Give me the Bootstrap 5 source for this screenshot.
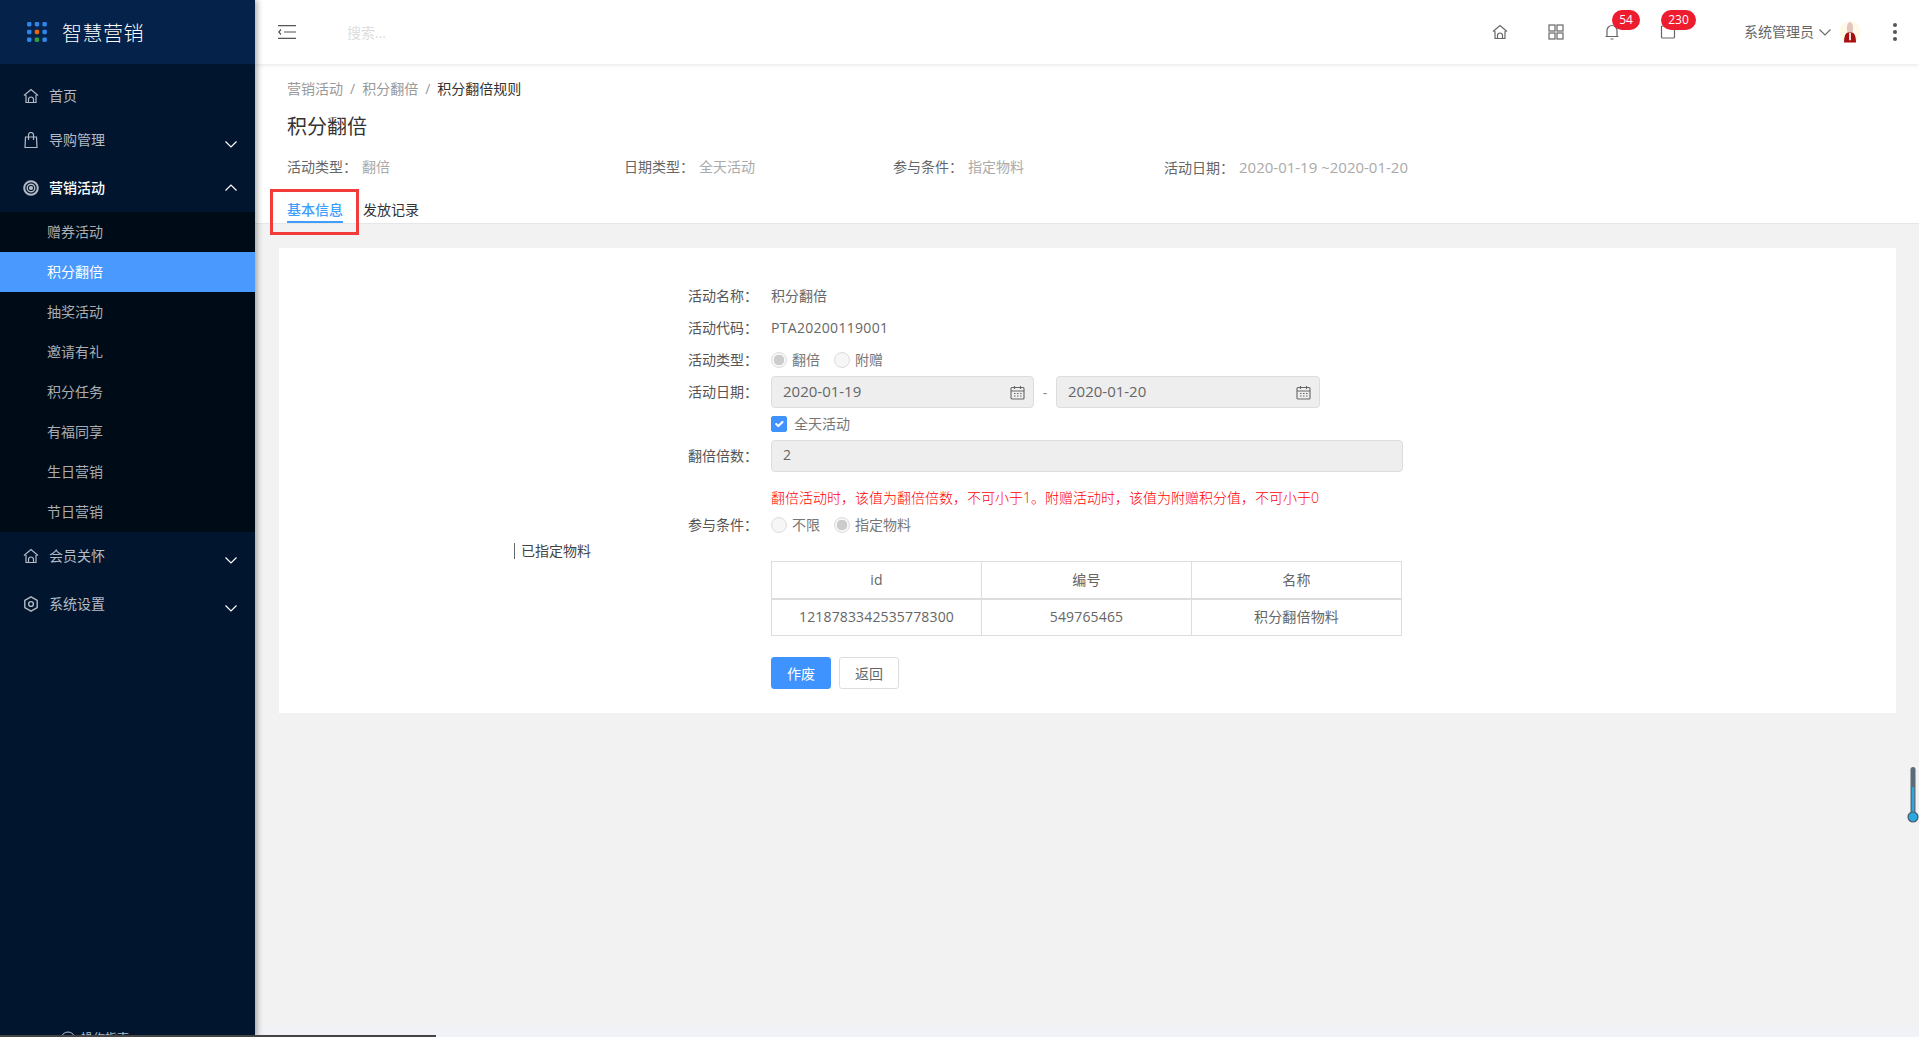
<!DOCTYPE html>
<html lang="zh">
<head>
<meta charset="utf-8">
<title>积分翻倍</title>
<link href="https://cdn.jsdelivr.net/npm/bootstrap@5.3.0/dist/css/bootstrap.min.css" rel="stylesheet">
<style>
html,body{height:100%}
body{overflow:hidden;background:#f2f2f2;font-family:"Open Sans","Noto Sans CJK SC",sans-serif;font-size:14px;color:#555}
.app-shell{height:100vh}
.side-bar{width:255px;flex:0 0 255px;background:#01162e;box-shadow:2px 0 6px rgba(0,0,0,.35);z-index:3;overflow:hidden}
.side-logo{height:64px;background:#05234a;padding-left:27px;gap:15px;color:#fff;font-size:20px;font-weight:300}
.side-logo span{padding-top:3px;letter-spacing:.5px}
.side-menu{padding-top:12px;flex:1 1 auto}
.menu-link{height:48px;padding:0 23px;gap:10px;color:#b4bbc5;position:relative}
.menu-link span{padding-bottom:2px}
.menu-link.first-link{height:40px}
.menu-link.open-link{color:#fff;font-weight:500}
.menu-link svg.ic{width:16px;height:16px;flex:none;stroke:#b4bbc5;fill:none;stroke-width:1.2}
.menu-arrow{position:absolute;left:225px;top:25px;width:12px;height:7px;stroke:#fff;fill:none;stroke-width:1.2}
.menu-arrow.up{top:20px}
.sub-menu{background:#000b18}
.sub-link{height:40px;padding:0 0 2px 47px;color:#a9adb2;display:flex;align-items:center}
.sub-link.current{background:#4a99ff;color:#fff}
.guide-link{height:20px;margin-bottom:-12px;padding-left:60px;gap:5px;color:#b4bbc5;font-size:12px}
.main-pane{min-width:0}
.top-bar{height:64px;flex:none;background:#fff;box-shadow:0 1px 4px rgba(0,0,0,.1);z-index:2;padding-left:23px}
.top-search{margin-left:51px;color:#ddd;font-size:14px}
.top-icon{width:56px;height:64px;position:relative;display:flex;align-items:center;justify-content:center}
.top-icon svg{width:16px;height:16px;stroke:#666;fill:none;stroke-width:1.2}
.top-count{position:absolute;top:10px;height:20px;border-radius:10px;background:#ed1c2e;color:#fff;font-size:12px;line-height:20px;text-align:center}
.top-user{margin-left:48px;color:#666;gap:5px}
.top-user>span{padding-bottom:2px}
.top-user .avatar-pic{margin-left:3px;width:22px;height:22px}
.top-dots{margin:0 22px 0 32px;width:4px;gap:3px}
.top-dots i{display:block;width:4px;height:4px;border-radius:50%;background:#555}
.page-head{background:#fff;height:160px;flex:none;padding:0 0 0 32px;border-bottom:1px solid #e7e7e7;position:relative}
.crumbs{padding-top:15px;height:41px;color:#999;gap:7px;line-height:20px}
.crumbs b{color:#333;font-weight:400}
.page-name{font-size:20px;font-weight:400;color:#333;margin:7px 0 0;line-height:30px;height:30px}
.head-info{margin-top:15px;line-height:20px;height:20px}
.head-info>div:nth-child(1){width:337px}
.head-info>div:nth-child(2){width:269px}
.head-info>div:nth-child(3){width:271px}
.head-info span{color:#666}
.head-info em{font-style:normal;color:#aaa;margin-left:5px}
.head-info em.date-val{font-size:15px}
.head-tabs{position:absolute;left:32px;top:135px;gap:20px;color:#333;height:24px}
.tab-on{color:#409eff;font-weight:500;border-bottom:2px solid #409eff;height:24px;line-height:22px}
.tab-off{line-height:22px}
.mark-box{position:absolute;left:-17px;top:-10px;width:89px;height:46px;border:3px solid #f23b3b;pointer-events:none}
.form-card{background:#fff;margin:24px 23px 0 24px;padding:32px 0 24px}
.form-line{height:32px;display:flex;align-items:center}
.form-key{width:479px;margin-right:13px;text-align:right;flex:none;color:#555;padding-bottom:2px}
.form-val{color:#666;padding-bottom:2px}
.form-val.code-val{letter-spacing:.3px}
.plain-field{background:#eee;border:1px solid #ddd;border-radius:4px;height:32px;padding:0 11px;color:#666;line-height:30px;display:flex;align-items:center;justify-content:space-between}
.plain-field span{padding-bottom:2px}
.field-date{width:263px;font-size:15px}
.field-date.end-date{width:264px}
.field-wide{width:632px}
.field-date svg{width:15px;height:15px;stroke:#666;fill:none;stroke-width:1.1;margin-right:-3px}
.date-sep{width:22px;text-align:center;color:#888}
.form-check-input.gray-pick{width:16px;height:16px;margin:0;opacity:1;background-color:#f6f6f6;border-color:#ddd;flex:none}
.form-check-input.gray-pick:checked{background-image:none;background:radial-gradient(circle,#ccc 0 5px,#f6f6f6 5.5px);border-color:#ddd}
.form-check-input.blue-tick{width:16px;height:16px;margin:0;opacity:1;background-color:#3f93ff;border-color:#3f93ff;border-radius:2px}
.pick-text{margin:0 14px 0 5px;color:#777;padding-bottom:2px}
.hint-line{height:27px;padding:5px 0 0 492px;color:#f00;line-height:22px;font-weight:300}
.chosen-row{display:flex}
.chosen-side{width:492px;flex:none;height:22px;padding-left:235px;line-height:20px;color:#444}
.chosen-side span{border-left:1px solid #666;padding-left:6px;display:inline-block;line-height:16px}
.data-grid{width:631px;margin:20px 0 0;border-color:#ddd;color:#666;table-layout:fixed}
.data-grid th,.data-grid td{height:37px;padding:0 0 1px;text-align:center;vertical-align:middle;font-weight:400;color:#666;border-color:#ddd;letter-spacing:.15px}
.data-grid thead th{border-bottom-width:2px}
.act-row{padding-left:492px;margin-top:21px;gap:8px}
.act-row .btn{width:60px;height:32px;padding:2px 0 0;font-size:14px;border-radius:3px;line-height:28px}
.btn-void{background:#3f93ff;border-color:#3f93ff;color:#fff}
.btn-back{background:#fff;border-color:#ddd;color:#666}
.foot-strip{height:10px;background:#f0f2f7;flex:none;margin-top:auto}
.therm-gauge{position:absolute;right:0;top:766px;width:12px;height:57px;z-index:4}
.h-scroll{position:absolute;left:0;bottom:0;width:436px;height:2px;background:#444;z-index:5}
</style>
</head>
<body>
<div class="app-shell d-flex position-relative">
  <aside class="side-bar d-flex flex-column">
    <div class="side-logo d-flex align-items-center">
      <svg width="20" height="20" viewBox="0 0 20 20"><g fill="#2f86ea"><rect x="0" y="0" width="4.5" height="4.5" rx="1.4"/><rect x="7.7" y="0" width="4.5" height="4.5" rx="1.4"/><rect x="15.4" y="0" width="4.5" height="4.5" rx="1.4"/><rect x="0" y="7.7" width="4.5" height="4.5" rx="1.4"/><rect x="15.4" y="7.7" width="4.5" height="4.5" rx="1.4"/><rect x="0" y="15.4" width="4.5" height="4.5" rx="1.4"/><rect x="15.4" y="15.4" width="4.5" height="4.5" rx="1.4"/></g><rect x="7.7" y="7.7" width="4.5" height="4.5" rx="1.4" fill="#e8650f"/><rect x="7.7" y="15.4" width="4.5" height="4.5" rx="1.4" fill="#2e9e3f"/></svg>
      <span>智慧营销</span>
    </div>
    <nav class="side-menu">
      <div class="menu-link first-link d-flex align-items-center"><svg class="ic" viewBox="0 0 16 16"><path d="M1 7.5 8 1.5l7 6M3 7v7.5h10V7M5.5 14.5v-3a2.5 2.5 0 0 1 5 0v3"/></svg><span>首页</span></div>
      <div class="menu-link d-flex align-items-center"><svg class="ic" viewBox="0 0 16 16"><path d="M2.500 5h11l.5 10.500H2zM5.500 8V3a2.500 2.500 0 0 1 5 0v5"/></svg><span>导购管理</span><svg class="menu-arrow" viewBox="0 0 12 7"><path d="M.5.5 6 6 11.500.5"/></svg></div>
      <div class="menu-link open-link d-flex align-items-center"><svg class="ic" viewBox="0 0 16 16"><circle cx="8" cy="8" r="6.800" stroke-width="2"/><circle cx="8" cy="8" r="3.800" stroke-width="1.400"/><circle cx="8" cy="8" r="1.500" fill="#b4bbc5"/></svg><span>营销活动</span><svg class="menu-arrow up" viewBox="0 0 12 7"><path d="M.5 6.500 6 1l5.500 5.500"/></svg></div>
      <div class="sub-menu">
        <div class="sub-link">赠券活动</div>
        <div class="sub-link current">积分翻倍</div>
        <div class="sub-link">抽奖活动</div>
        <div class="sub-link">邀请有礼</div>
        <div class="sub-link">积分任务</div>
        <div class="sub-link">有福同享</div>
        <div class="sub-link">生日营销</div>
        <div class="sub-link">节日营销</div>
      </div>
      <div class="menu-link d-flex align-items-center"><svg class="ic" viewBox="0 0 16 16"><path d="M1 7.500 8 1.500l7 6M3 7v7.500h10V7M5.500 14.500v-3a2.500 2.500 0 0 1 5 0v3"/></svg><span>会员关怀</span><svg class="menu-arrow" viewBox="0 0 12 7"><path d="M.5.5 6 6 11.500.5"/></svg></div>
      <div class="menu-link d-flex align-items-center"><svg class="ic" viewBox="0 0 16 16" stroke-linejoin="round"><path d="M8 .8 14.200 4.400V11.600L8 15.200 1.800 11.600V4.400z" stroke-width="1.400"/><circle cx="8" cy="8" r="2.400" stroke-width="1.400"/></svg><span>系统设置</span><svg class="menu-arrow" viewBox="0 0 12 7"><path d="M.5.5 6 6 11.500.5"/></svg></div>
    </nav>
    <div class="guide-link d-flex align-items-center"><svg width="16" height="16" viewBox="0 0 16 16" fill="none" stroke="#b4bbc5"><circle cx="8" cy="8" r="7"/><path d="M8 7v4M8 4.500v1"/></svg><span>操作指南</span></div>
  </aside>
  <div class="main-pane flex-grow-1 d-flex flex-column">
    <header class="top-bar d-flex align-items-center">
      <svg width="18" height="14" viewBox="0 0 18 14" fill="none" stroke="#555" stroke-width="1.200"><path d="M0 .6h18M6 7h12M0 13.400h18M3 4.500.8 7 3 9.500"/></svg>
      <span class="top-search">搜索...</span>
      <div class="ms-auto d-flex align-items-center">
        <div class="top-icon"><svg viewBox="0 0 16 16"><path d="M1 7.500 8 1.500l7 6M3 7v7.500h10V7M5.500 14.500v-3a2.500 2.500 0 0 1 5 0v3"/></svg></div>
        <div class="top-icon"><svg viewBox="0 0 16 16"><rect x="1" y="1" width="6" height="6"/><rect x="9" y="1" width="6" height="6"/><rect x="1" y="9" width="6" height="6"/><rect x="9" y="9" width="6" height="6"/></svg></div>
        <div class="top-icon"><svg viewBox="0 0 16 16"><path d="M3 12.500V6.500a5 5 0 0 1 10 0v6M1.500 12.500h13M6.500 15h3"/></svg><span class="top-count" style="left:28px;width:28px">54</span></div>
        <div class="top-icon"><svg viewBox="0 0 16 16"><rect x="1.500" y="2" width="13" height="12" rx="1"/></svg><span class="top-count" style="left:21px;width:35px">230</span></div>
        <div class="top-user d-flex align-items-center"><span>系统管理员</span>
          <svg width="12" height="7" viewBox="0 0 12 7" fill="none" stroke="#666" stroke-width="1.100"><path d="M.5.500 6 6l5.500-5.500"/></svg>
          <svg class="avatar-pic" viewBox="0 0 24 24"><circle cx="12" cy="12" r="11.500" fill="#fff9e8"/><ellipse cx="12" cy="8" rx="3.400" ry="7" fill="#e4c4bf"/><path d="M5.500 23.500c0-7 1.500-10.500 4.500-11h4c3 .5 4.500 4 4.500 11z" fill="#a80f0f"/><path d="M11 13h2v8h-2z" fill="#f7f0ea"/></svg>
        </div>
        <div class="top-dots d-flex flex-column"><i></i><i></i><i></i></div>
      </div>
    </header>
    <section class="page-head">
      <div class="crumbs d-flex"><span>营销活动</span><span>/</span><span>积分翻倍</span><span>/</span><b>积分翻倍规则</b></div>
      <h1 class="page-name">积分翻倍</h1>
      <div class="head-info d-flex">
        <div><span>活动类型：</span><em>翻倍</em></div>
        <div><span>日期类型：</span><em>全天活动</em></div>
        <div><span>参与条件：</span><em>指定物料</em></div>
        <div><span>活动日期：</span><em class="date-val">2020-01-19 ~2020-01-20</em></div>
      </div>
      <div class="head-tabs d-flex">
        <div class="tab-on position-relative">基本信息<span class="mark-box"></span></div>
        <div class="tab-off">发放记录</div>
      </div>
    </section>
    <section class="form-card">
      <div class="form-line"><div class="form-key">活动名称：</div><div class="form-val">积分翻倍</div></div>
      <div class="form-line"><div class="form-key">活动代码：</div><div class="form-val code-val">PTA20200119001</div></div>
      <div class="form-line"><div class="form-key">活动类型：</div><input class="form-check-input gray-pick" type="radio" name="t1" checked disabled><span class="pick-text">翻倍</span><input class="form-check-input gray-pick" type="radio" name="t1" disabled><span class="pick-text">附赠</span></div>
      <div class="form-line"><div class="form-key">活动日期：</div>
        <div class="plain-field field-date"><span>2020-01-19</span><svg viewBox="0 0 15 15"><rect x="1" y="2.500" width="13" height="11.500" rx="1"/><path d="M1 6h13M4.500 1v3M10.500 1v3M4 8.500h1.500M7 8.500h1.500M10 8.500h1.500M4 11h1.500M7 11h1.500M10 11h1.500"/></svg></div>
        <div class="date-sep">-</div>
        <div class="plain-field field-date end-date"><span>2020-01-20</span><svg viewBox="0 0 15 15"><rect x="1" y="2.500" width="13" height="11.500" rx="1"/><path d="M1 6h13M4.500 1v3M10.500 1v3M4 8.500h1.500M7 8.500h1.500M10 8.500h1.500M4 11h1.500M7 11h1.500M10 11h1.500"/></svg></div>
      </div>
      <div class="form-line"><div class="form-key"></div><input class="form-check-input blue-tick" type="checkbox" checked disabled><span class="pick-text" style="margin-left:7px">全天活动</span></div>
      <div class="form-line"><div class="form-key">翻倍倍数：</div><div class="plain-field field-wide"><span>2</span></div></div>
      <div class="hint-line" style="margin-top:10px">翻倍活动时，该值为翻倍倍数，不可小于1。附赠活动时，该值为附赠积分值，不可小于0</div>
      <div class="form-line"><div class="form-key">参与条件：</div><input class="form-check-input gray-pick" type="radio" name="t2" disabled><span class="pick-text">不限</span><input class="form-check-input gray-pick" type="radio" name="t2" checked disabled><span class="pick-text">指定物料</span></div>
      <div class="chosen-row">
        <div class="chosen-side"><span>已指定物料</span></div>
        <table class="table table-bordered data-grid">
          <thead><tr><th>id</th><th>编号</th><th>名称</th></tr></thead>
          <tbody><tr><td>1218783342535778300</td><td>549765465</td><td>积分翻倍物料</td></tr></tbody>
        </table>
      </div>
      <div class="act-row d-flex"><button class="btn btn-void" type="button">作废</button><button class="btn btn-back" type="button">返回</button></div>
    </section>
    <div class="foot-strip"></div>
  </div>
  <svg class="therm-gauge" viewBox="0 0 12 57"><rect x="3.500" y="1" width="5" height="48" rx="2.500" fill="#5b6b78"/><rect x="5" y="21" width="2.200" height="30" fill="#2ea8dc"/><circle cx="6" cy="51" r="5" fill="#2ea8dc" stroke="#4a5a68" stroke-width="1.200"/></svg>
  <div class="h-scroll"></div>
</div>
<script src="https://cdn.jsdelivr.net/npm/bootstrap@5.3.0/dist/js/bootstrap.bundle.min.js"></script>
</body>
</html>
